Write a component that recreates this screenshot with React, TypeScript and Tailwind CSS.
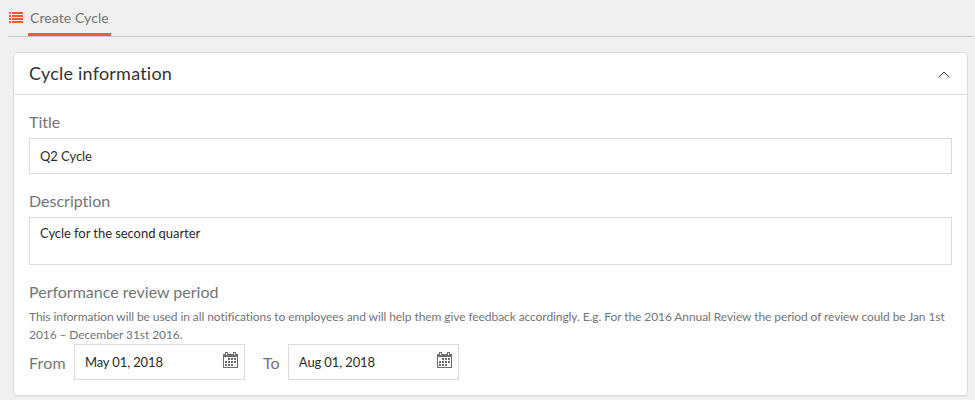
import React, { useState } from "react";

const inputStyle =
  "block rounded-none border border-[#dcdcdc] bg-white px-[10px] text-[13px] tracking-[-0.06px] text-[#2b2b2b] outline-none";

const labelStyle = "block text-[16px] leading-5 text-[#757575]";

// List icon shown before the tab
const ListIcon: React.FC = () => (
  <svg width="14" height="11" viewBox="0 0 14 11" fill="#f55a36" shapeRendering="crispEdges">
    {[0, 3, 6, 9].map((y) => (
      <g key={y}>
        <rect x="0" y={y} width="2" height="2" />
        <rect x="3" y={y} width="11" height="2" />
      </g>
    ))}
  </svg>
);

// Days drawn on the calendar icon, [column, row]
const days = [
  [1, 0], [2, 0], [3, 0],
  [0, 1], [1, 1], [2, 1], [3, 1],
  [0, 2], [1, 2], [2, 2],
];

const CalendarIcon: React.FC = () => (
  <svg width="15" height="16" viewBox="0 0 15 16" fill="#6d6d6d" shapeRendering="crispEdges">
    <path d="M0 2h15v14H0zM1 5v10h13V5z" fillRule="evenodd" />
    <rect x="2" y="0" width="3" height="4" />
    <rect x="10" y="0" width="3" height="4" />
    <rect x="3" y="1" width="1" height="2" fill="#fff" />
    <rect x="11" y="1" width="1" height="2" fill="#fff" />
    {days.map(([col, row]) => (
      <rect key={`${col}-${row}`} x={2 + col * 3} y={6 + row * 3} width="2" height="2" />
    ))}
  </svg>
);

const DateField: React.FC<{ label: string; initial: string }> = ({ label, initial }) => {
  const [value, setValue] = useState(initial);

  return (
    <label className="flex items-center">
      <span className="mr-2 pt-px text-[16px] leading-5 tracking-[0.2px] text-[#757575]">{label}</span>
      <span className="flex h-9 w-[171px] items-center border border-[#dcdcdc] bg-white pr-[6px] pl-[10px]">
        <input
          type="text"
          value={value}
          onChange={(e) => setValue(e.target.value)}
          className="min-w-0 flex-1 pt-px text-[13px] tracking-[-0.12px] text-[#2b2b2b] outline-none"
        />
        <span className="mb-1">
          <CalendarIcon />
        </span>
      </span>
    </label>
  );
};

const App: React.FC = () => {
  const [open, setOpen] = useState(true);
  const [title, setTitle] = useState("Q2 Cycle");
  const [description, setDescription] = useState("Cycle for the second quarter");

  return (
    <div className="h-[400px] overflow-hidden bg-[#f0f0f0] font-['Lato',sans-serif] [font-variant-ligatures:none]">
      <nav className="mr-[2px] ml-2 flex h-[37px] border-b border-[#c8c8c8]">
        <span className="mt-3 ml-px w-[19px]">
          <ListIcon />
        </span>
        <a className="h-9 border-b-[3px] border-[#f55a36] px-[2px] pt-2 text-[14px] leading-5 tracking-[0.08px] text-[#757575]">
          Create Cycle
        </a>
      </nav>

      <section className="mt-[15px] mr-[7px] ml-[13px] h-[344px] rounded border border-[#dcdcdc] bg-white shadow-[0_1px_1px_rgba(0,0,0,0.05)]">
        <header className="flex h-[42px] items-center justify-between border-b border-[#dcdcdc] pr-[17px] pl-[15px]">
          <h2 className="pb-[2px] text-[18px] leading-6 tracking-[0.22px] text-[#333]">Cycle information</h2>
          <button type="button" onClick={() => setOpen(!open)} className="pt-[2px]">
            <svg width="12" height="7" viewBox="0 0 12 7" fill="none" stroke="#444" className={open ? "" : "rotate-180"}>
              <path d="M.5 6.5 6 1l5.5 5.5" />
            </svg>
          </button>
        </header>

        {open && (
          <div className="px-[15px] pt-[17px]">
            <label className={labelStyle} htmlFor="title">Title</label>
            <input
              id="title"
              type="text"
              value={title}
              onChange={(e) => setTitle(e.target.value)}
              className={`${inputStyle} mt-[6px] h-9 w-full`}
            />

            <label className={`${labelStyle} mt-[17px]`} htmlFor="description">Description</label>
            <textarea
              id="description"
              value={description}
              onChange={(e) => setDescription(e.target.value)}
              className={`${inputStyle} mt-[6px] h-12 w-full resize-none pt-[6px] leading-[18px]`}
            />

            <h3 className={`${labelStyle} mt-[17px]`}>Performance review period</h3>
            <p className="mt-[6px] text-[12px] leading-[18px] tracking-[-0.083px] text-[#757575]">
              This information will be used in all notifications to employees and will help them give feedback
              accordingly. E.g. For the 2016 Annual Review the period of review could be Jan 1st 2016 – December 31st
              2016.
            </p>
            <div className="flex gap-[18px]">
              <DateField label="From" initial="May 01, 2018" />
              <DateField label="To" initial="Aug 01, 2018" />
            </div>
          </div>
        )}
      </section>
    </div>
  );
};

export default App;
